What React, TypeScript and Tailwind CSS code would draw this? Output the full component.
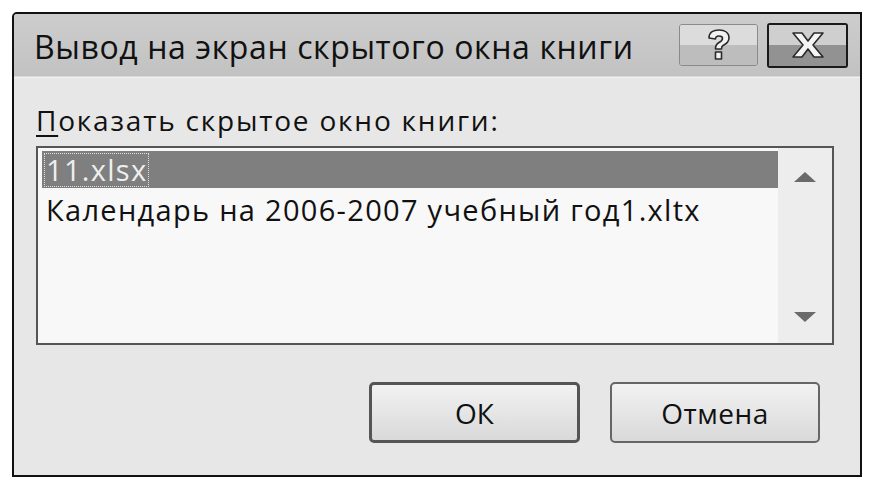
import React from "react";

const font = { fontFamily: '"Open Sans", "Liberation Sans", sans-serif' };

function UpArrow() {
  return (
    <svg width="24" height="12" viewBox="0 0 24 12">
      <path d="M12 1 L23 11 L1 11 Z" fill="#6a6a6a" />
    </svg>
  );
}
function DownArrow() {
  return (
    <svg width="24" height="12" viewBox="0 0 24 12">
      <path d="M1 1 L23 1 L12 11 Z" fill="#6a6a6a" />
    </svg>
  );
}

function CloseX() {
  return (
    <svg width="36" height="28" viewBox="0 0 36 28">
      <path
        d="M3 2 H12 L18 10 L24 2 H33 L23 14 L33 26 H24 L18 18 L12 26 H3 L13 14 Z"
        fill="#f4f4f4"
        stroke="#2a2a2a"
        strokeWidth="1.6"
        strokeLinejoin="round"
      />
    </svg>
  );
}

function Help() {
  return (
    <svg width="26" height="32" viewBox="0 0 26 32">
      <path
        d="M3 9 C3 3 8 1 13 1 C19 1 23 4 23 9 C23 13 20 15 17 16.5 C15.5 17.3 15.5 18 15.5 20 H9.5 C9.5 16.5 10 15 13 13.5 C15.5 12.3 16.5 11.5 16.5 9.5 C16.5 7.8 15 7 13 7 C11 7 9.5 8 9.5 10 Z M9.5 23 H15.5 V30 H9.5 Z"
        fill="#f2f2f2"
        stroke="#2a2a2a"
        strokeWidth="1.6"
        strokeLinejoin="round"
      />
    </svg>
  );
}

export default function App() {
  return (
    <div className="w-[876px] h-[488px] bg-white pt-[12px] pl-[12px]" style={font}>
      <div className="w-[850px] h-[465px] border-2 border-[#111] rounded-tl-[5px] bg-[#e7e7e7] flex flex-col overflow-hidden">
        {/* Title bar */}
        <div className="h-[63px] bg-gradient-to-b from-[#cdcdcd] to-[#c2c2c2] flex items-center pl-[20px] pr-[12px] border-b border-[#d8d8d8]">
          <div className="flex-1 text-[32px] leading-none text-[#111] tracking-[0.6px] pt-[4px]">
            Вывод на экран скрытого окна книги
          </div>
          <div className="flex items-center gap-[9px]">
            <div className="w-[79px] h-[42px] rounded-[3px] border border-[#8a8a8a] overflow-hidden flex flex-col relative">
              <div className="h-1/2 bg-[#dcdcdc]" />
              <div className="h-1/2 bg-[#bdbdbd]" />
              <div className="absolute inset-0 flex items-center justify-center">
                <Help />
              </div>
            </div>
            <div className="w-[81px] h-[45px] rounded-[3px] border-2 border-[#1a1a1a] overflow-hidden flex flex-col relative">
              <div className="h-1/2 bg-[#cfcfcf]" />
              <div className="h-1/2 bg-[#929292]" />
              <div className="absolute inset-0 flex items-center justify-center">
                <CloseX />
              </div>
            </div>
          </div>
        </div>

        {/* Body */}
        <div className="flex-1 flex flex-col pl-[22px] pr-[24px] border-t border-[#f2f2f2]">
          <div className="mt-[25px] h-[34px] text-[28px] leading-[34px] text-[#111] tracking-[1.8px]">
            <span className="underline decoration-[2px] underline-offset-[4px]">П</span>оказать скрытое окно книги:
          </div>
          <div className="mt-[9px] w-[798px] h-[199px] border-2 border-[#555] bg-[#f8f8f8] flex">
            <div className="flex-1 pl-[4px] pt-[3px] flex flex-col">
              <div className="h-[37px] bg-[#7f7f7f] flex items-center pl-[2px]">
                <span className="text-[29px] leading-[32px] text-[#eeeeee] border border-dotted border-[#e0e0e0] px-[1px] tracking-[1.3px]">
                  11.xlsx
                </span>
              </div>
              <div className="h-[44px] flex items-center pl-[4px] text-[29px] text-[#111] tracking-[1.3px]">
                Календарь на 2006-2007 учебный год1.xltx
              </div>
            </div>
            <div className="w-[54px] bg-[#ededed] flex flex-col items-center justify-between pt-[23px] pb-[20px]">
              <UpArrow />
              <DownArrow />
            </div>
          </div>
          <div className="flex justify-end gap-[30px] mt-[37px] pr-[16px]">
            <div className="w-[211px] h-[61px] rounded-[5px] border-[3px] border-[#555] bg-gradient-to-b from-[#f2f2f2] to-[#d9d9d9] flex items-center justify-center text-[28px] text-[#111]">
              ОК
            </div>
            <div className="w-[210px] h-[61px] rounded-[5px] border-2 border-[#666] bg-gradient-to-b from-[#f2f2f2] to-[#d9d9d9] flex items-center justify-center text-[28px] text-[#111] tracking-[0.5px]">
              Отмена
            </div>
          </div>
        </div>
      </div>
    </div>
  );
}
